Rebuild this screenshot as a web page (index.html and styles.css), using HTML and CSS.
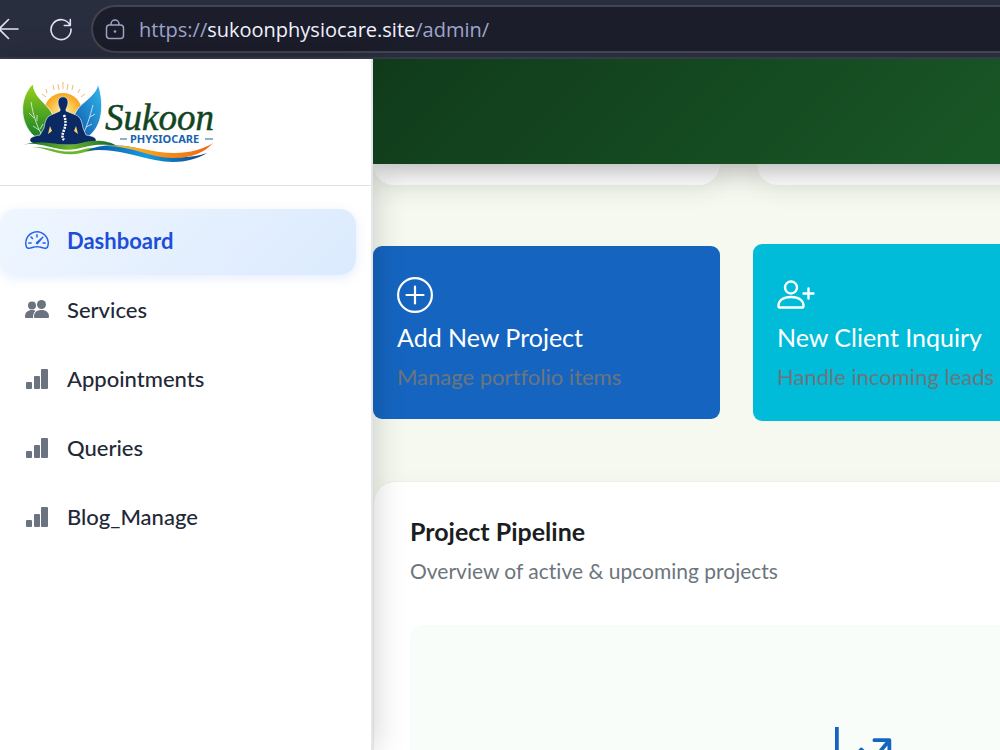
FILE: index.html
```html
<!DOCTYPE html>
<html lang="en">
<head>
<meta charset="utf-8">
<title>Sukoon Physiocare Admin</title>
<link rel="stylesheet" href="styles.css">
</head>
<body>
<svg class="sprite" aria-hidden="true">
  <symbol id="bars" viewBox="0 0 24 24">
    <rect x="1" y="16" width="6" height="7" rx="1"/>
    <rect x="9" y="10" width="6" height="13" rx="1"/>
    <rect x="16" y="3" width="7" height="20" rx="1"/>
  </symbol>
</svg>
<div class="toolbar">
  <button class="tool tool-back" aria-label="Back">
    <svg width="22" height="22" viewBox="0 0 22 22" fill="none" stroke="currentColor" stroke-width="1.6" stroke-linecap="round" stroke-linejoin="round"><path d="M21 11H2M11.500 1.500 2 11l9.500 9.500"/></svg>
  </button>
  <button class="tool" aria-label="Reload">
    <svg width="24" height="24" viewBox="0 0 24 24" fill="none" stroke="currentColor" stroke-width="1.6" stroke-linecap="round" stroke-linejoin="round"><path d="M21 8.200A10 10 0 1 0 22 12M21.300 2.500v6h-6"/></svg>
  </button>
  <div class="address">
    <svg width="20" height="22" viewBox="0 0 20 22" fill="none" stroke="currentColor" stroke-width="1.500"><rect x="1.500" y="6" width="17" height="13.500" rx="3"/><path d="M6 6V5a4 4 0 0 1 8 0v1"/><circle cx="10" cy="12.500" r="1.300" fill="currentColor" stroke="none"/></svg>
    <a class="url" href="#">https://<span class="url-host">sukoonphysiocare.site</span>/admin/</a>
  </div>
</div>
<div class="app">
  <aside class="sidebar">
    <div class="brand">
      <svg class="logo" viewBox="0 0 206 86" width="206" height="86" role="img" aria-label="Sukoon Physiocare">
        <defs>
          <linearGradient id="leafG" x1="0" y1="0" x2="0" y2="1"><stop offset="0" stop-color="#9bd11a"/><stop offset="1" stop-color="#0f7d2a"/></linearGradient>
          <linearGradient id="leafB" x1="1" y1="0" x2="0" y2="1"><stop offset="0" stop-color="#35b8ee"/><stop offset="1" stop-color="#0750a6"/></linearGradient>
          <radialGradient id="sun"><stop offset="0" stop-color="#fff3a0"/><stop offset="1" stop-color="#f8a51c"/></radialGradient>
          <linearGradient id="waveG"><stop offset="0" stop-color="#08652b"/><stop offset=".5" stop-color="#6cb52d"/><stop offset="1" stop-color="#08652b"/></linearGradient>
          <linearGradient id="waveB"><stop offset="0" stop-color="#0750a6"/><stop offset=".5" stop-color="#149be0"/><stop offset="1" stop-color="#0c3f87"/></linearGradient>
          <linearGradient id="waveO"><stop offset="0" stop-color="#fbc22d"/><stop offset="1" stop-color="#ee6411"/></linearGradient>
        </defs>
        <path d="M34 10l1 4M41 6l1 5M46 5l1 6M51 3v7M56 5l-1 6M61 6l-1 5M68 10l-2 4M30 15l4 3M73 15l-4 3" stroke="#f6b877" stroke-width="1"/>
        <circle cx="51" cy="33" r="19" fill="url(#sun)"/>
        <path d="M21 5C7 18 7 44 22 57c4 3 7 4 11 4 10-8 12-20 5-30C31 22 22 17 21 5z" fill="url(#leafG)" stroke="#fff" stroke-width=".8"/>
        <path d="M86 5c5 14 6 35-4 47-4 5-8 8-14 9-9-8-10-19-3-30C71 22 84 17 86 5z" fill="url(#leafB)" stroke="#fff" stroke-width=".8"/>
        <path d="M19 23c2 13 6 25 12 35M25 42v-6M28 50l3-5M22 39l-5-5M27 51l-6-4M81 26c-3 12-6 21-11 32M78 38l5-3M74 48l6-3" fill="none" stroke="#fff" stroke-width=".7"/>
        <path d="M46 23c0-7 10-7 10 0 0 3-1 5-2 7v2l10 4c5 2 6 8 7 13l3 7c7 1 11 3 10 6-2 4-14 4-21 4H39c-7 0-19 0-21-4-1-3 3-5 10-6l4-7c1-6 2-11 7-13l9-4v-2c-1-2-2-4-2-7z" fill="#0b2a63" stroke="#fff" stroke-width=".6"/>
        <path d="M38 47l-2 8 4-3zM64 47l2 8-4-3z" fill="#fbd36b"/>
        <path d="M52 36q3 8 0 15t0 10" fill="none" stroke="#fff" stroke-width="2.500" stroke-dasharray="2 1"/>
        <path d="M11 66c24-8 37 4 58-2 15-4 28-2 36 3-19-3-28 0-41 3-21 4-34-9-53-4z" fill="url(#waveG)"/>
        <path d="M20 68c20-1 30 8 49 3 11-3 23-3 30-1-15-1-25 4-36 5-17 2-27-6-43-7z" fill="#6cb52d"/>
        <path d="M74 72c21-10 46-5 70 2 20 6 37 5 51 0-15 9-33 11-52 7-24-5-45-13-69-9z" fill="url(#waveB)"/>
        <path d="M96 67c20-3 44 7 66 7 16 0 30-4 39-10-8 9-21 15-40 15-22 0-42-12-65-12z" fill="url(#waveO)"/>
        <text class="logo-script" x="93" y="51">Sukoon</text>
        <text class="logo-caps" x="118" y="64">PHYSIOCARE</text>
        <path d="M108 60h7M193 60h8" stroke="#1764ad" stroke-width="1"/>
      </svg>
    </div>
    <nav class="nav">
      <a class="nav-item nav-item--active" href="#">
        <svg width="24" height="24" viewBox="0 0 16 16" fill="currentColor"><path d="M8 4a.5.5 0 0 1 .5.5V6a.5.5 0 0 1-1 0V4.500A.5.5 0 0 1 8 4M3.732 5.732a.5.5 0 0 1 .707 0l.915.914a.5.5 0 1 1-.708.708l-.914-.915a.5.5 0 0 1 0-.707M2 10a.5.5 0 0 1 .5-.5h1.586a.5.5 0 0 1 0 1H2.500A.5.5 0 0 1 2 10m9.500 0a.5.5 0 0 1 .5-.5h1.500a.5.5 0 0 1 0 1H12a.5.5 0 0 1-.5-.5m.754-4.246a.39.39 0 0 0-.527-.02L7.547 9.310a.91.91 0 1 0 1.302 1.258l3.434-4.297a.39.39 0 0 0-.029-.518z"/><path fill-rule="evenodd" d="M0 10a8 8 0 1 1 15.547 2.661c-.442 1.253-1.845 1.602-2.932 1.250C11.309 13.488 9.475 13 8 13c-1.474 0-3.310.488-4.615.911-1.087.352-2.490.003-2.932-1.250A8 8 0 0 1 0 10m8-7a7 7 0 0 0-6.603 9.329c.203.575.923.876 1.680.630C4.397 12.533 6.358 12 8 12s3.604.532 4.923.960c.757.245 1.477-.056 1.680-.631A7 7 0 0 0 8 3"/></svg>
        Dashboard
      </a>
      <a class="nav-item" href="#">
        <svg width="24" height="24" viewBox="0 0 24 24" fill="currentColor"><circle cx="7" cy="8.500" r="4"/><circle cx="16.500" cy="7.500" r="4.500"/><path d="M0 20c0-5 3-7 7-7 1.500 0 2.500.3 3.500 1C8.500 15.500 8 18 8 21H1.500C.5 21 0 20.800 0 20zM9 19.500c0-4.500 3.500-6.500 7.500-6.500s7.500 2 7.500 6.500c0 1-.5 1.500-1.500 1.500h-12C9.500 21 9 20.500 9 19.500z"/></svg>
        Services
      </a>
      <a class="nav-item" href="#"><svg width="24" height="24" fill="currentColor"><use href="#bars"/></svg>Appointments</a>
      <a class="nav-item" href="#"><svg width="24" height="24" fill="currentColor"><use href="#bars"/></svg>Queries</a>
      <a class="nav-item" href="#"><svg width="24" height="24" fill="currentColor"><use href="#bars"/></svg>Blog_Manage</a>
    </nav>
  </aside>
  <main class="main">
    <header class="banner"></header>
    <div class="row">
      <div class="stat"></div>
      <div class="stat"></div>
    </div>
    <div class="row row--actions">
      <a class="action action--blue" href="#">
        <svg width="36" height="36" viewBox="0 0 36 36" fill="none" stroke="currentColor" stroke-width="2.200" stroke-linecap="round"><circle cx="18" cy="18" r="16.900"/><path d="M18 9.500v17M9.500 18h17"/></svg>
        <span class="action-title">Add New Project</span>
        <span class="action-text">Manage portfolio items</span>
      </a>
      <a class="action action--cyan" href="#">
        <svg width="38" height="36" viewBox="0 0 38 36" fill="none" stroke="currentColor" stroke-width="2.400" stroke-linecap="round" stroke-linejoin="round"><circle cx="14" cy="10.500" r="6"/><path d="M1.500 29c0-5.500 4.500-9 12.500-9s12.500 3.500 12.500 9c0 1-.3 1.500-1 1.500h-23c-.7 0-1-.5-1-1.500zM31.500 11.500v10M26.500 16.500h10"/></svg>
        <span class="action-title">New Client Inquiry</span>
        <span class="action-text">Handle incoming leads</span>
      </a>
    </div>
    <section class="panel">
      <h2 class="panel-title">Project Pipeline</h2>
      <p class="panel-text">Overview of active &amp; upcoming projects</p>
      <div class="chart">
        <svg width="60" height="60" viewBox="0 0 16 16" fill="currentColor"><path fill-rule="evenodd" d="M0 0h1v15h15v1H0zm10 3.500a.5.5 0 0 1 .5-.5h4a.5.5 0 0 1 .5.5v4a.5.5 0 0 1-1 0V4.900l-3.613 4.417a.5.5 0 0 1-.740.037L7.060 6.767l-3.656 5.027a.5.5 0 0 1-.808-.588l4-5.500a.5.5 0 0 1 .758-.060l2.609 2.610L13.445 4H10.500a.5.5 0 0 1-.5-.5"/></svg>
      </div>
    </section>
  </main>
</div>
</body>
</html>
```
FILE: styles.css
```css
* { box-sizing: border-box; }
body {
  margin: 0;
  height: 100vh;
  overflow: hidden;
  display: flex;
  flex-direction: column;
  font-family: "Lato", "Noto Sans", sans-serif;
  font-variant-ligatures: none;
  background: #f6f9f0;
}
a { text-decoration: none; color: inherit; }
svg { display: block; flex: none; }
.sprite { position: absolute; width: 0; height: 0; }

.toolbar {
  flex: none;
  display: flex;
  align-items: center;
  height: 59px;
  background: #292e3f;
  border-bottom: 2px solid #373a48;
}
.tool {
  padding: 0;
  border: 0;
  background: none;
  color: #dfe3f5;
}
.tool-back { margin-left: -3px; margin-right: 30px; }
.address {
  flex: 1;
  display: flex;
  align-items: center;
  gap: 14px;
  height: 48px;
  margin-left: 18px;
  padding: 2px 0 0 12px;
  border: 2px solid #42444f;
  border-right: 0;
  border-radius: 24px 0 0 24px;
  background: #1c1d2a;
  color: #9da3c3;
}
.url { font-family: "Open Sans", sans-serif; font-size: 20px; color: #9ea5cc; }
.url-host { color: #f1f3ff; }

.app { flex: 1; min-height: 0; display: flex; }
.sidebar {
  position: relative;
  z-index: 2;
  flex: none;
  width: 373px;
  background: #fff;
  border-right: 2px solid #e4e6e8;
  box-shadow: 0 0 32px rgba(0, 0, 0, 0.2);
}
.brand {
  padding: 20px 12px;
  border-bottom: 1px solid #dee2e6;
}
.logo-script {
  font-family: "Liberation Serif", serif;
  font-style: italic;
  font-size: 37px;
  fill: #12451f;
  stroke: #12451f;
  stroke-width: 0.5px;
}
.logo-caps {
  font-family: "Noto Sans", sans-serif;
  font-weight: 700;
  font-size: 11px;
  fill: #1764ad;
}
.nav {
  display: flex;
  flex-direction: column;
  gap: 3px;
  padding: 23px 15px 0 0;
}
.nav-item {
  display: flex;
  align-items: center;
  gap: 18px;
  height: 66px;
  padding: 0 25px 4px;
  border-radius: 16px;
  font-size: 22px;
  font-weight: 500;
  color: #1f2937;
}
.nav-item svg { color: #6b7280; }
.nav-item--active {
  font-weight: 700;
  color: #1d4ed8;
  background: linear-gradient(135deg, #eff6ff, #dbeafe);
  box-shadow: 0 3px 12px rgba(37, 99, 235, 0.12);
}
.nav-item--active svg { color: #2563eb; }

.main { flex: 1; min-width: 0; overflow: hidden; }
.banner {
  position: relative;
  z-index: 3;
  min-width: 983px;
  height: 105px;
  background: linear-gradient(135deg, #103b1b, #1d652b);
  box-shadow: 0 4px 30px rgba(0, 0, 0, 0.35);
}
.row {
  display: grid;
  grid-auto-flow: column;
  grid-auto-columns: minmax(347px, 1fr);
  gap: 37px;
}
.row--actions { padding: 61px 0 62px; }
.stat {
  height: 21px;
  border-radius: 0 0 22px 22px;
  background: #fff;
  box-shadow: 0 8px 24px rgba(20, 60, 20, 0.06);
}
.action {
  display: flex;
  flex-direction: column;
  height: 173px;
  padding: 31px 24px 0;
  border-radius: 9px;
  color: #fff;
}
.action--blue { background: #1565c0; }
.action--cyan {
  height: 177px;
  margin: -2px -4px;
  padding-top: 33px;
  background: #00bcd8;
}
.action-title { margin-top: 8px; font-size: 25px; line-height: 32px; }
.action-text { margin-top: 8px; font-size: 22px; line-height: 32px; color: #6c757d; }
.panel {
  min-width: 983px;
  padding: 33px 36px;
  border: 1px solid #edf1ea;
  border-radius: 22px;
  background: #fff;
  box-shadow: 0 8px 30px rgba(20, 60, 20, 0.04);
}
.panel-title { margin: 0; font-size: 25px; line-height: 32px; color: #1a1d21; }
.panel-text { margin: 8px 0 38px; font-size: 21px; line-height: 32px; color: #6c757d; }
.chart {
  display: flex;
  justify-content: center;
  height: 300px;
  padding-top: 102px;
  border-radius: 14px;
  background: #f8fdf9;
  color: #1565c0;
}
```
